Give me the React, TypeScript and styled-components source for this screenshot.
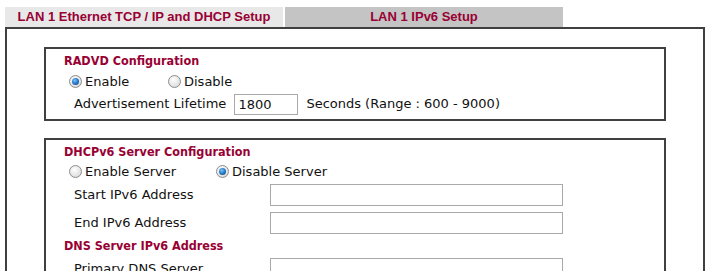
import React from "react";
import styled, { createGlobalStyle, css } from "styled-components";

const GlobalStyle = createGlobalStyle`
  html, body {
    margin: 0;
    background: #ffffff;
    overflow: hidden;
  }
  body {
    padding: 7px 5px 0 5px;
    font-family: "DejaVu Sans", Verdana, sans-serif;
    font-size: 13px;
    color: #111111;
  }
`;

interface TabProps {
  $active?: boolean;
}

interface RowProps {
  $height: number;
}

interface WidthProps {
  $width?: number;
}

interface RadioProps {
  $checked?: boolean;
}

function Radio({ checked, label, width }: { checked?: boolean; label: string; width?: number }) {
  return (
    <RadioOption $width={width}>
      <RadioMark $checked={checked} />
      <span>{label}</span>
    </RadioOption>
  );
}

function App() {
  return (
    <>
      <GlobalStyle />
      <Page>
        <TabBar>
          <Tab>LAN 1 Ethernet TCP / IP and DHCP Setup</Tab>
          <Tab $active>LAN 1 IPv6 Setup</Tab>
        </TabBar>
        <Panel>
          <Section>
            <SectionTitle $height={20}>RADVD Configuration</SectionTitle>
            <RadioRow $height={21}>
              <Radio checked label="Enable" width={99} />
              <Radio label="Disable" />
            </RadioRow>
            <FieldRow $height={24}>
              <span>Advertisement Lifetime</span>
              <TextInput $width={64} $short defaultValue="1800" />
              <span>Seconds (Range : 600 - 9000)</span>
            </FieldRow>
          </Section>

          <Section>
            <SectionTitle $height={20}>DHCPv6 Server Configuration</SectionTitle>
            <RadioRow $height={19}>
              <Radio label="Enable Server" width={147} />
              <Radio checked label="Disable Server" />
            </RadioRow>
            <FieldRow $height={28}>
              <Label>Start IPv6 Address</Label>
              <TextInput $width={293} />
            </FieldRow>
            <FieldRow $height={28}>
              <Label>End IPv6 Address</Label>
              <TextInput $width={293} />
            </FieldRow>
            <SectionTitle $height={18}>DNS Server IPv6 Address</SectionTitle>
            <FieldRow $height={28}>
              <Label>Primary DNS Server</Label>
              <TextInput $width={293} />
            </FieldRow>
          </Section>
        </Panel>
      </Page>
    </>
  );
}

export default App;

const Page = styled.div`
  width: 700px;
`;

const TabBar = styled.div`
  display: flex;
  gap: 2px;
  height: 20px;
`;

const Tab = styled.div<TabProps>`
  width: 278px;
  height: 20px;
  line-height: 20px;
  text-align: center;
  font-family: "Liberation Sans", Arial, sans-serif;
  font-weight: bold;
  font-size: 13px;
  color: #990033;
  background: ${(p) => (p.$active ? "#c4c4c4" : "#e8e8e8")};
`;

const Panel = styled.div`
  border: 2px solid #404040;
  padding: 18px 0 40px 0;
  display: flex;
  flex-direction: column;
  gap: 17px;
`;

const Section = styled.div`
  box-sizing: border-box;
  width: 622px;
  margin: 0 auto;
  border: 2px solid #404040;
  padding: 2px 0 3px 18px;
`;

const rowBase = css<RowProps>`
  height: ${(p) => p.$height}px;
  line-height: ${(p) => p.$height}px;
  display: flex;
  align-items: center;
`;

const SectionTitle = styled.div<RowProps>`
  ${rowBase};
  font-family: "DejaVu Sans Condensed", "DejaVu Sans", sans-serif;
  font-weight: bold;
  font-size: 12.5px;
  color: #990033;
`;

const RadioRow = styled.div<RowProps>`
  ${rowBase};
  padding-left: 5px;
`;

const FieldRow = styled.div<RowProps>`
  ${rowBase};
  padding-left: 10px;
  gap: 8px;
`;

const Label = styled.span`
  width: 188px;
`;

const RadioOption = styled.label<WidthProps>`
  display: flex;
  align-items: center;
  gap: 3px;
  width: ${(p) => (p.$width ? `${p.$width}px` : "auto")};
`;

const RadioMark = styled.span<RadioProps>`
  width: 11px;
  height: 11px;
  border-radius: 50%;
  border: 1px solid #8c8c8c;
  background: radial-gradient(circle at 40% 35%, #ffffff 0%, #e4e4e4 60%, #cfcfcf 100%);
  position: relative;
  flex: none;

  ${(p) =>
    p.$checked &&
    css`
      &::after {
        content: "";
        position: absolute;
        left: 2px;
        top: 2px;
        width: 7px;
        height: 7px;
        border-radius: 50%;
        background: radial-gradient(circle at 40% 35%, #7fc4f5 0%, #2a7fd0 45%, #123c6e 100%);
      }
    `}
`;

const TextInput = styled.input<WidthProps & { $short?: boolean }>`
  box-sizing: border-box;
  width: ${(p) => p.$width}px;
  height: ${(p) => (p.$short ? 21 : 22)}px;
  border: 1px solid #a9a9a9;
  padding: 0 3px;
  margin: 0;
  font-family: "DejaVu Sans", Verdana, sans-serif;
  font-size: 13px;
  color: #111111;
  outline: none;
`;
